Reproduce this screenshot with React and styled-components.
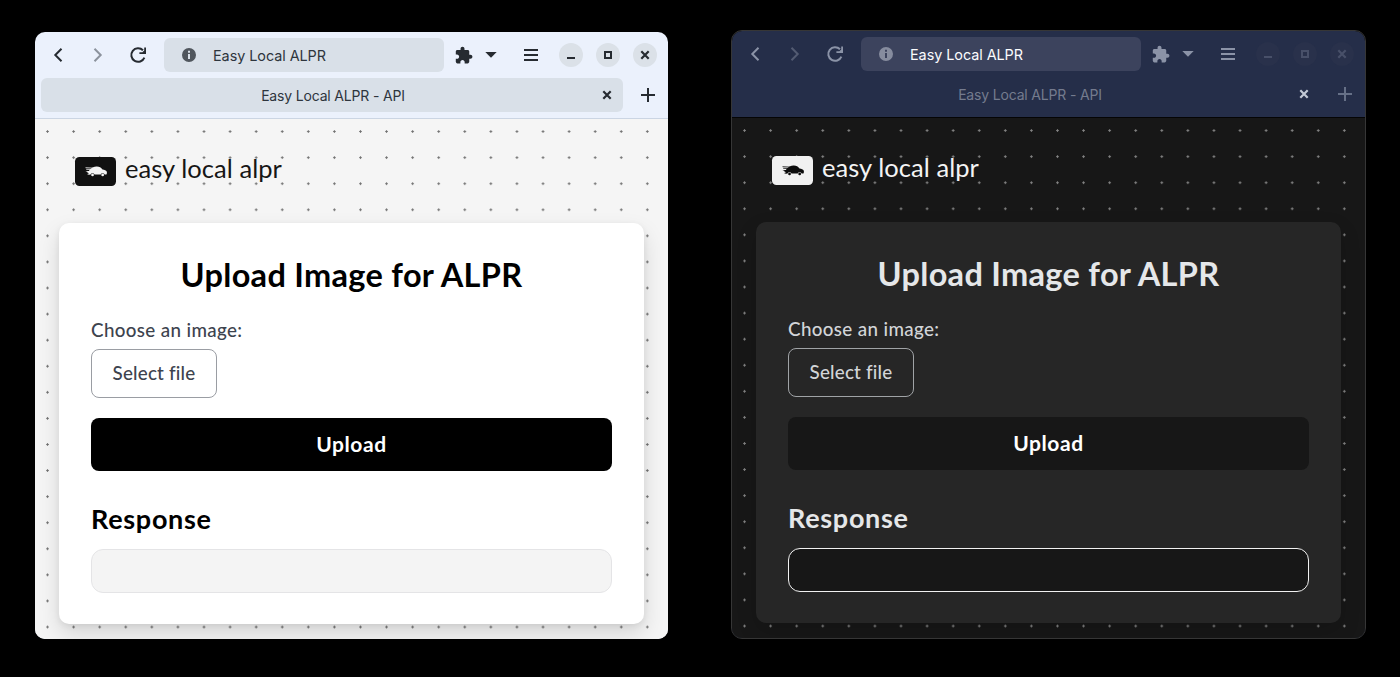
import React from 'react';
import styled, { createGlobalStyle, ThemeProvider } from 'styled-components';

const light = {
  frame: 'transparent', bar: '#ebf1fc', field: '#d9e0e8', tab: '#d9e0e8', line: '#cbd5e3',
  icon: '#262b31', iconDim: '#8c939d', info: '#50565d', urlText: '#2e353d', tabText: '#2e353d',
  ctl: '#dbe1e8', ctlIcon: '#262b31', tabClose: '#262b31', plus: '#262b31',
  page: '#f5f5f5', dot: '#6f6f6f', logo: '#111111', logoInk: '#f5f5f5', brand: '#161616',
  card: '#ffffff', shadow: '0 10px 22px rgba(0,0,0,.13), 0 2px 6px rgba(0,0,0,.07)',
  title: '#000000', label: '#3d434e', outline: '#9a9da3', button: '#000000', box: '#f4f4f4', boxLine: '#e4e4e6',
};
const dark = {
  frame: '#363636', bar: '#252e49', field: '#3c435d', tab: 'transparent', line: '#050505',
  icon: '#8b93a7', iconDim: '#535b72', info: '#868c9e', urlText: '#fafbfd', tabText: '#747b8e',
  ctl: '#29314b', ctlIcon: '#485069', tabClose: '#c3c9d5', plus: '#667087',
  page: '#171717', dot: '#858585', logo: '#f1f1f1', logoInk: '#0c0c0c', brand: '#f4f4f4',
  card: '#262626', shadow: '0 8px 20px rgba(0,0,0,.15)',
  title: '#e5e7e9', label: '#d2d5d8', outline: '#a0a3a6', button: '#171717', box: '#171717', boxLine: '#f1f1f1',
};

const Global = createGlobalStyle`
  body { margin: 0; background: #000; }
  * { box-sizing: border-box; }
  button { font: inherit; border: 0; padding: 0; margin: 0; background: none; }
  svg { display: block; }
`;
const Desktop = styled.main`
  height: 677px;
  padding: 30px 34px;
  display: flex;
  justify-content: space-between;
  background: #000;
  overflow: hidden;
`;
const Window = styled.section`
  width: 635px;
  height: 609px;
  margin-top: ${p => p.$drop || 0}px;
  border: 1px solid ${p => p.theme.frame};
  border-radius: 11px;
  background: ${p => p.theme.bar};
  background-clip: padding-box;
  overflow: hidden;
  display: flex;
  flex-direction: column;
`;
const Chrome = styled.header`
  height: 87px;
  flex: none;
  border-bottom: 1px solid ${p => p.theme.line};
  font-family: Inter, sans-serif;
`;
const Toolbar = styled.div`
  display: flex;
  align-items: center;
  height: 46px;
  padding-left: 3px;
`;
const IconCell = styled.button`
  width: ${p => p.$w}px;
  height: 34px;
  flex: none;
  display: grid;
  place-items: center;
  color: ${p => p.theme[p.$tone || 'icon']};
`;
const Address = styled.div`
  width: 280px;
  height: 34px;
  flex: none;
  margin: 0 6px;
  padding-left: 17px;
  border-radius: 6px;
  background: ${p => p.theme.field};
  color: ${p => p.theme.urlText};
  font-size: 14.4px;
  line-height: 18px;
  letter-spacing: -0.05px;
  display: flex;
  align-items: center;
  gap: 16px;
  svg { color: ${p => p.theme.info}; }
  span { padding-top: 2px; }
`;
const Controls = styled.div`
  display: flex;
  gap: 13px;
  margin-left: 1px;
`;
const Control = styled.button`
  width: 24px;
  height: 24px;
  border-radius: 50%;
  background: ${p => p.theme.ctl};
  color: ${p => p.theme.ctlIcon};
  display: grid;
  place-items: center;
`;
const Tabs = styled.div`
  display: flex;
  height: 34px;
  padding-left: 6px;
  align-items: center;
`;
const Tab = styled.div`
  width: 582px;
  height: 34px;
  flex: none;
  border-radius: 6px;
  background: ${p => p.theme.tab};
  color: ${p => p.theme.tabText};
  font-size: 14px;
  letter-spacing: -0.17px;
  display: grid;
  grid-template-columns: 34px 1fr 32px;
  align-items: center;
  text-align: center;
`;
const Page = styled.div`
  flex: 1;
  padding: 37px 24px 0;
  background-color: ${p => p.theme.page};
  background-image: radial-gradient(circle, ${p => p.theme.dot} 0.9px, transparent 1.4px);
  background-size: 26.08px 26.08px;
  background-position: -0.5px -0.5px;
  font-family: Lato, sans-serif;
`;
const Brand = styled.div`
  height: 67px;
  padding-left: 16px;
  display: flex;
  align-items: flex-start;
  gap: 9px;
`;
const Badge = styled.div`
  width: 41px;
  height: 29px;
  margin-top: 0.6px;
  border-radius: 4.5px;
  background: ${p => p.theme.logo};
  color: ${p => p.theme.logoInk};
  display: grid;
  place-items: center;
`;
const BrandName = styled.span`
  font-size: 25.5px;
  line-height: 24px;
  letter-spacing: 0.05px;
  color: ${p => p.theme.brand};
`;
const Card = styled.div`
  height: 401px;
  padding: 32px 32px 31px;
  border-radius: 10px;
  background: ${p => p.theme.card};
  box-shadow: ${p => p.theme.shadow};
  display: flex;
  flex-direction: column;
`;
const Title = styled.h1`
  margin: 0;
  height: 60px;
  font-size: 32.5px;
  line-height: 40px;
  font-weight: 700;
  letter-spacing: 0.3px;
  text-align: center;
  color: ${p => p.theme.title};
`;
const Label = styled.label`
  height: 34px;
  font-size: 18.8px;
  line-height: 30px;
  font-weight: 500;
  letter-spacing: 0.36px;
  color: ${p => p.theme.label};
`;
const FileButton = styled.button`
  && {
    width: 126px;
    height: 49px;
    padding-bottom: 2px;
    border: 1px solid ${p => p.theme.outline};
    border-radius: 8px;
    font-size: 18.8px;
    font-weight: 500;
    letter-spacing: 0.2px;
    color: ${p => p.theme.label};
  }
`;
const Submit = styled.button`
  && {
    height: 53px;
    margin-top: 20px;
    padding-bottom: 2px;
    border-radius: 8px;
    background: ${p => p.theme.button};
    color: #fff;
    font-size: 21px;
    font-weight: 700;
    letter-spacing: 0.6px;
  }
`;
const Subtitle = styled.h2`
  margin: 31px 0 0;
  height: 47px;
  font-size: 27px;
  line-height: 34px;
  font-weight: 700;
  letter-spacing: 0.7px;
  color: ${p => p.theme.title};
`;
const Output = styled.div`
  height: 44px;
  border: 1px solid ${p => p.theme.boxLine};
  border-radius: 12px;
  background: ${p => p.theme.box};
`;

const Svg = ({ s = 16, children, ...rest }) => (
  <svg width={s} height={s} viewBox="0 0 16 16" fill="none" stroke="currentColor" strokeWidth="2" {...rest}>{children}</svg>
);
const Cross = () => <Svg><path d="M4.3 4.3l7.4 7.4M11.7 4.3l-7.4 7.4" strokeWidth="2.2" /></Svg>;
const Puzzle = () => (
  <svg width="19" height="19" viewBox="0 0 24 24" fill="currentColor">
    <path d="M19.5 11H18V7c0-1.1-.9-2-2-2h-4V3.5C12 2.12 10.88 1 9.5 1S7 2.12 7 3.5V5H3c-1.1 0-1.99.9-1.99 2v3.8H2.5c1.49 0 2.7 1.21 2.7 2.7s-1.21 2.7-2.7 2.7H1V20c0 1.1.9 2 2 2h3.8v-1.5c0-1.49 1.21-2.7 2.7-2.7s2.7 1.21 2.7 2.7V22H16c1.1 0 2-.9 2-2v-4h1.5c1.38 0 2.5-1.12 2.5-2.5S20.88 11 19.5 11z" />
  </svg>
);
const Reload = () => (
  <Svg s={18} viewBox="0 0 18 18">
    <path d="M15.4 11.6A6.8 6.8 0 1 1 14 4.3" />
    <path d="M17 1.6V8h-6.6V6.2h3L15.2 4.4V1.6z" fill="currentColor" stroke="none" />
  </Svg>
);
const Info = () => (
  <svg width="16" height="16" viewBox="0 0 16 16" fill="currentColor">
    <path fillRule="evenodd" d="M8 1a7 7 0 1 1 0 14A7 7 0 0 1 8 1zM7 3.8v2h2v-2zM7 7v5h2V7z" />
  </svg>
);
const Car = () => (
  <svg width="22" height="11" viewBox="0 0 22 11" fill="currentColor">
    <path d="M5 3.6C7 1.8 9 .7 11.5.6c2.8-.1 4.600 1 6 3 2 .2 3.600.8 4.200 2 .4 1 .2 2.300-.3 2.900h-1.800a2 2 0 0 0-3.900 0H9.500a2 2 0 0 0-3.900 0H4.200L3.400 7.200l-1.800-.4 2-.4L.4 5.200l3.400-.3z" />
    <path d="M.5 1.700l7.500.4M1.200 3.300l5 .2M2.600 8.300h2" stroke="currentColor" strokeWidth=".8" />
    <circle cx="7.55" cy="8.9" r="1.35" />
    <circle cx="17.65" cy="8.9" r="1.35" />
  </svg>
);

function Browser({ theme, drop }) {
  return (
    <ThemeProvider theme={theme}>
      <Window $drop={drop}>
        <Chrome>
          <Toolbar>
            <IconCell $w={40}><Svg><path d="M11.5 1.8L5.3 8l6.2 6.2" /></Svg></IconCell>
            <IconCell $w={40} $tone="iconDim"><Svg><path d="M4.5 1.8L10.7 8l-6.2 6.2" /></Svg></IconCell>
            <IconCell $w={40}><Reload /></IconCell>
            <Address><Info /><span>Easy Local ALPR</span></Address>
            <IconCell $w={28}><Puzzle /></IconCell>
            <IconCell $w={26}><Svg stroke="none" fill="currentColor"><path d="M2.3 5h11.4L8 10.8z" /></Svg></IconCell>
            <IconCell $w={54}><Svg><path d="M1 3h14M1 8h14M1 13h14" /></Svg></IconCell>
            <Controls>
              <Control><Svg><path d="M4 11h8" /></Svg></Control>
              <Control><Svg><path d="M5 5h6v6H5z" /></Svg></Control>
              <Control><Cross /></Control>
            </Controls>
          </Toolbar>
          <Tabs>
            <Tab>
              <span />
              <span>Easy Local ALPR - API</span>
              <IconCell $w={32} $tone="tabClose"><Cross /></IconCell>
            </Tab>
            <IconCell $w={50} $tone="plus"><Svg><path d="M8 1v14M1 8h14" /></Svg></IconCell>
          </Tabs>
        </Chrome>
        <Page>
          <Brand>
            <Badge><Car /></Badge>
            <BrandName>easy local alpr</BrandName>
          </Brand>
          <Card>
            <Title>Upload Image for ALPR</Title>
            <Label>Choose an image:</Label>
            <FileButton>Select file</FileButton>
            <Submit>Upload</Submit>
            <Subtitle>Response</Subtitle>
            <Output />
          </Card>
        </Page>
      </Window>
    </ThemeProvider>
  );
}

export default function App() {
  return (
    <>
      <Global />
      <Desktop>
        <Browser theme={light} drop={1} />
        <Browser theme={dark} />
      </Desktop>
    </>
  );
}
